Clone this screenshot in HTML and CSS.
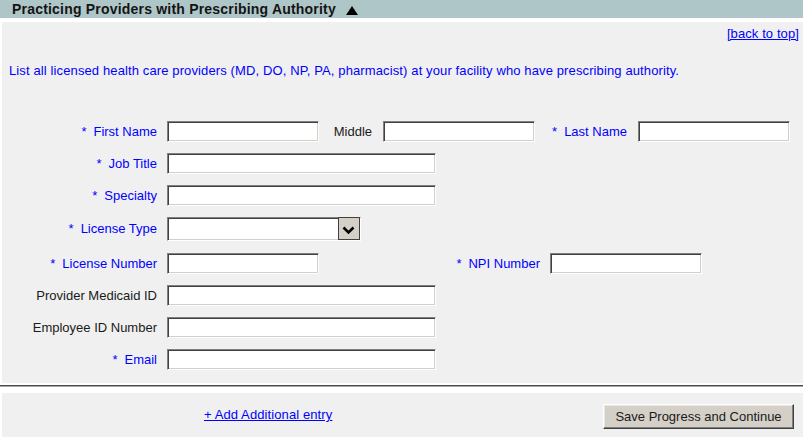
FILE: index.html
```html
<!DOCTYPE html>
<html>
<head>
<meta charset="utf-8">
<title>Practicing Providers with Prescribing Authority</title>
<link rel="stylesheet" href="styles.css">
</head>
<body>
<div class="header">
  <span class="htitle">Practicing Providers with Prescribing Authority</span>
  <svg class="tri" width="12" height="9" viewBox="0 0 12 9"><path d="M6 0 L12 9 L0 9 Z" fill="#000"/></svg>
</div>
<div class="panel">
  <div class="backtop"><a href="#">[back to top]</a></div>
  <p class="intro">List all licensed health care providers (MD, DO, NP, PA, pharmacist) at your facility who have prescribing authority.</p>
  <div class="form">
    <div class="row">
      <label class="lbl req"><span class="ast">*</span>First Name</label>
      <input class="tb sm" type="text">
      <label class="ilbl mid">Middle</label>
      <input class="tb sm" type="text">
      <label class="ilbl last req"><span class="ast">*</span>Last Name</label>
      <input class="tb sm" type="text">
    </div>
    <div class="row">
      <label class="lbl req"><span class="ast">*</span>Job Title</label>
      <input class="tb wide" type="text">
    </div>
    <div class="row">
      <label class="lbl req"><span class="ast">*</span>Specialty</label>
      <input class="tb wide" type="text">
    </div>
    <div class="row selrow">
      <label class="lbl req"><span class="ast">*</span>License Type</label>
      <span class="sel">
        <select class="selbox"><option></option></select>
        <span class="selbtn"><svg width="20" height="21" viewBox="0 0 20 21"><polyline points="4.5,9.5 9.5,14.5 14.5,9.5" fill="none" stroke="#000" stroke-width="2.6"/></svg></span>
      </span>
    </div>
    <div class="row">
      <label class="lbl req"><span class="ast">*</span>License Number</label>
      <input class="tb sm" type="text">
      <label class="ilbl npi req"><span class="ast">*</span>NPI Number</label>
      <input class="tb sm" type="text">
    </div>
    <div class="row">
      <label class="lbl">Provider Medicaid ID</label>
      <input class="tb wide" type="text">
    </div>
    <div class="row">
      <label class="lbl">Employee ID Number</label>
      <input class="tb wide" type="text">
    </div>
    <div class="row">
      <label class="lbl req"><span class="ast">*</span>Email</label>
      <input class="tb wide" type="text">
    </div>
  </div>
</div>
<div class="sep"></div>
<div class="footer">
  <a href="#" class="addlink">+ Add Additional entry</a>
  <button class="savebtn" type="button">Save Progress and Continue</button>
</div>
</body>
</html>
```
FILE: styles.css
```css
html, body {
  margin: 0;
  padding: 0;
  background: #ffffff;
}
body {
  width: 803px;
  font-family: "Liberation Sans", Arial, sans-serif;
  font-size: 13px;
  color: #1a1a1a;
  overflow: hidden;
}
a {
  color: #0000ff;
  text-decoration: underline;
}
.header {
  height: 18px;
  background: #aec6c7;
  display: flex;
  align-items: center;
  padding-left: 12px;
}
.htitle {
  font-weight: bold;
  font-size: 14px;
  letter-spacing: 0.2px;
  color: #141414;
  line-height: 18px;
}
.tri {
  margin-left: 10px;
  margin-top: 3px;
}
.panel {
  margin-top: 4px;
  margin-left: 2px;
  background: #f0f0f0;
  padding: 4px 0 7px 0;
}
.backtop {
  text-align: right;
  line-height: 16px;
  padding-right: 4px;
  letter-spacing: 0.1px;
}
.intro {
  margin: 21px 0 0 7px;
  line-height: 16px;
  color: #0000ff;
  letter-spacing: 0.12px;
}
.form {
  margin-top: 37px;
}
.row {
  display: flex;
  align-items: flex-start;
  padding: 5px 0 6px 0;
}
.row.selrow {
  padding-bottom: 7px;
}
.lbl, .ilbl {
  line-height: 21px;
  text-align: right;
  color: #1a1a1a;
  white-space: nowrap;
}
.selrow .lbl {
  line-height: 24px;
}
.lbl {
  width: 155px;
  margin-right: 10px;
}
.req {
  color: #0000ff;
}
.ast {
  margin-right: 7px;
}
.ilbl.mid {
  width: 53px;
  padding-right: 11px;
}
.ilbl.last {
  width: 92px;
  padding-right: 11px;
}
.ilbl.npi {
  width: 221px;
  padding-right: 10px;
}
.tb {
  box-sizing: border-box;
  height: 21px;
  margin: 0;
  padding: 1px 3px;
  background: #ffffff;
  border: 1px solid;
  border-color: #808080 #ffffff #ffffff #808080;
  box-shadow: inset 1px 1px 0 #404040, inset -1px -1px 0 #d4d0c8;
  font-family: "Liberation Sans", Arial, sans-serif;
  font-size: 13px;
  outline: none;
}
.tb.sm {
  width: 152px;
}
.tb.wide {
  width: 269px;
}
.sel {
  position: relative;
  display: block;
  width: 194px;
  height: 24px;
}
.selbox {
  appearance: none;
  -webkit-appearance: none;
  box-sizing: border-box;
  width: 194px;
  height: 24px;
  margin: 0;
  background: #ffffff;
  border: 1px solid;
  border-color: #808080 #ffffff #ffffff #808080;
  box-shadow: inset 1px 1px 0 #404040, inset -1px -1px 0 #d4d0c8;
  border-radius: 0;
  font-family: "Liberation Sans", Arial, sans-serif;
  font-size: 13px;
  outline: none;
}
.selbtn {
  position: absolute;
  top: 0;
  right: 1px;
  width: 22px;
  height: 23px;
  box-sizing: border-box;
  background: #d4d0c8;
  border: 1px solid #404040;
  display: flex;
  align-items: center;
  justify-content: center;
}
.sep {
  margin-top: 2px;
  height: 0;
  border-top: 1px solid #4a4a4a;
  border-bottom: 1px solid #a8a8a8;
  margin-bottom: 6px;
}
.footer {
  margin-left: 2px;
  background: #f0f0f0;
  height: 50px;
  display: flex;
  align-items: flex-start;
  justify-content: space-between;
  padding: 11px 9px 0 202px;
  box-sizing: border-box;
}
.addlink {
  margin-top: 3px;
  line-height: 16px;
  letter-spacing: 0.1px;
}
.savebtn {
  box-sizing: border-box;
  width: 191px;
  height: 25px;
  margin: 0;
  padding: 0 0 1px 0;
  background: #d4d0c8;
  border: 1px solid;
  border-color: #ffffff #404040 #404040 #ffffff;
  box-shadow: inset -1px -1px 0 #808080, inset 1px 1px 0 #e8e6e2;
  font-family: "Liberation Sans", Arial, sans-serif;
  font-size: 13px;
  color: #1a1a1a;
  border-radius: 0;
}
```
